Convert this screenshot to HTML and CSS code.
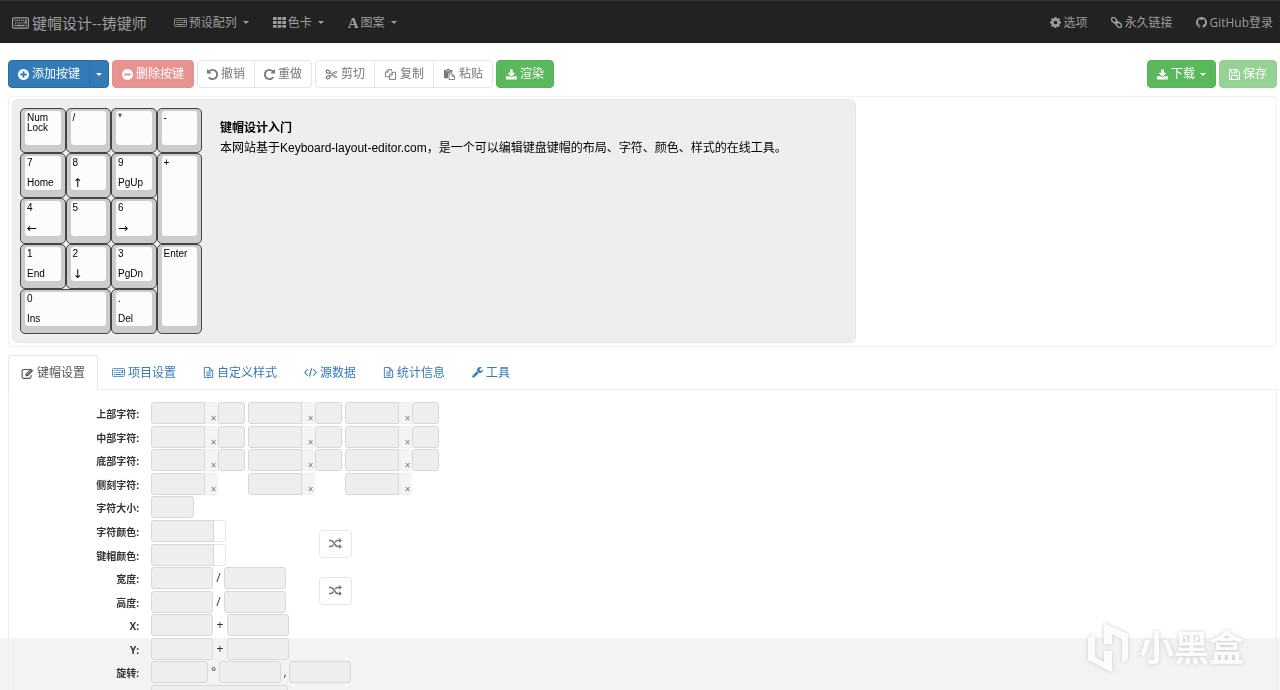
FILE: index.html
```html
<!DOCTYPE html>
<html lang="zh-CN">
<head>
<meta charset="utf-8">
<title>键帽设计--铸键师</title>
<link rel="stylesheet" href="styles.css">
</head>
<body>
<svg class="sprite" aria-hidden="true">
  <symbol id="keyboard" viewBox="0 0 15 10"><rect x=".5" y=".5" width="14" height="9" rx="1" fill="none" stroke="currentColor"/><path d="M2 2.7h11M2.6 4.9h10" stroke="currentColor" stroke-width="1.2" stroke-dasharray="1.2 .7"/><path d="M2 7.2h1.4M4 7.2h7M11.6 7.2h1.4M12.4 2.2v3.4" stroke="currentColor" stroke-width="1.2"/></symbol>
  <symbol id="grid" viewBox="0 0 12 10"><path fill="currentColor" d="M0 0h3.4v2.7H0zM4.3 0h3.4v2.7H4.3zM8.6 0H12v2.7H8.6zM0 3.6h3.4v2.7H0zM4.3 3.6h3.4v2.7H4.3zM8.6 3.6H12v2.7H8.6zM0 7.2h3.4v2.7H0zM4.3 7.2h3.4v2.7H4.3zM8.6 7.2H12v2.7H8.6z"/></symbol>
  <symbol id="cog" viewBox="128 128 1536 1536"><path fill="currentColor" d="M1152 896q0-106-75-181t-181-75-181 75-75 181 75 181 181 75 181-75 75-181zm512-109v222q0 12-8 23t-20 13l-185 28q-19 54-39 91 35 50 107 138 10 12 10 25t-9 23q-27 37-99 108t-94 71q-12 0-26-9l-138-108q-44 23-91 38-16 136-29 186-7 28-36 28h-222q-14 0-24.5-8.5t-11.5-21.5l-28-184q-49-16-90-37l-141 107q-10 9-25 9-14 0-25-11-126-114-165-168-7-10-7-23 0-12 8-23 15-21 51-66.5t54-70.5q-27-50-41-99l-183-27q-13-2-21-12.5t-8-23.5v-222q0-12 8-23t19-13l186-28q14-46 39-92-40-57-107-138-10-12-10-24 0-10 9-23 26-36 98.5-107.5t94.5-71.5q13 0 26 10l138 107q44-23 91-38 16-136 29-186 7-28 36-28h222q14 0 24.5 8.5t11.5 21.5l28 184q49 16 90 37l142-107q9-9 24-9 13 0 25 10 129 119 165 170 7 8 7 22 0 12-8 23-15 21-51 66.5t-54 70.5q26 50 41 98l183 28q13 2 21 12.5t8 23.5z"/></symbol>
  <symbol id="link" viewBox="0 0 12 12"><g fill="none" stroke="currentColor" stroke-width="1.6" transform="rotate(45 6 6)"><rect x="-.9" y="3.9" width="6.6" height="4.2" rx="2"/><rect x="6.3" y="3.9" width="6.6" height="4.2" rx="2"/><path d="M4 6h4"/></g></symbol>
  <symbol id="github" viewBox="128 128 1536 1536"><path fill="currentColor" d="M896 128q209 0 385.500 103t279.500 279.500 103 385.500q0 251-146.500 451.500t-378.500 277.500q-27 5-40-7t-13-30q0-3 .5-76.500t.5-134.500q0-97-52-142 57-6 102.500-18t94-39 81-66.500 53-105 20.500-150.500q0-119-79-206 37-91-8-204-28-9-81 11t-92 44l-38 24q-93-26-192-26t-192 26q-16-11-42.500-27t-83.500-38.500-85-13.500q-45 113-8 204-79 87-79 206 0 85 20.500 150t52.500 105 80.500 67 94 39 102.500 18q-39 36-49 103-21 10-45 15t-57 5-65.500-21.500-55.500-62.500q-19-32-48.500-52t-49.500-24l-20-3q-21 0-29 4.500t-5 11.500 9 14 13 12l7 5q22 10 43.500 38t31.500 51l10 23q13 38 44 61.500t67 30 69.500 7 55.500-3.500l23-4q0 38 .5 88.500t.5 54.500q0 18-13 30t-40 7q-232-77-378.500-277.500t-146.500-451.500q0-209 103-385.500t279.500-279.500 385.500-103z"/></symbol>
  <symbol id="plus" viewBox="128 128 1536 1536"><path fill="currentColor" d="M1344 960v-128q0-26-19-45t-45-19h-256v-256q0-26-19-45t-45-19h-128q-26 0-45 19t-19 45v256h-256q-26 0-45 19t-19 45v128q0 26 19 45t45 19h256v256q0 26 19 45t45 19h128q26 0 45-19t19-45v-256h256q26 0 45-19t19-45zm320-64q0 209-103 385.500t-279.500 279.500-385.500 103-385.500-103-279.500-279.500-103-385.500 103-385.500 279.500-279.500 385.500-103 385.500 103 279.500 279.500 103 385.500z"/></symbol>
  <symbol id="minus" viewBox="128 128 1536 1536"><path fill="currentColor" d="M1344 960v-128q0-26-19-45t-45-19h-768q-26 0-45 19t-19 45v128q0 26 19 45t45 19h768q26 0 45-19t19-45zm320-64q0 209-103 385.500t-279.500 279.500-385.500 103-385.500-103-279.500-279.500-103-385.500 103-385.500 279.500-279.500 385.500-103 385.500 103 279.500 279.500 103 385.500z"/></symbol>
  <symbol id="undo" viewBox="128 128 1536 1536"><path fill="currentColor" d="M1664 896q0 156-61 298t-164 245-245 164-298 61q-172 0-327-72.500t-264-204.500q-7-10-6.500-22.500t8.500-20.500l137-138q10-9 25-9 16 2 23 12 73 95 179 147t225 52q104 0 198.500-40.500t163.500-109.500 109.500-163.500 40.500-198.500-40.500-198.500-109.500-163.500-163.500-109.500-198.500-40.500q-98 0-188 35.500t-160 101.500l137 138q31 30 14 69-17 40-59 40h-448q-26 0-45-19t-19-45v-448q0-42 40-59 39-17 69 14l130 129q107-101 244.500-156.500t284.500-55.500q156 0 298 61t245 164 164 245 61 298z"/></symbol>
  <symbol id="scissors" viewBox="0 0 13 12"><g fill="none" stroke="currentColor"><ellipse cx="2.900" cy="3" rx="2.200" ry="1.600" stroke-width="1.300" transform="rotate(25 2.900 3)"/><ellipse cx="2.900" cy="9" rx="2.200" ry="1.600" stroke-width="1.300" transform="rotate(-25 2.900 9)"/><path d="M4.700 4.200 8 6l4.500-2.800-1.300-.6L6.300 5M4.700 7.800 8 6l4.500 2.800-1.300.6L6.300 7" stroke-width=".9"/></g></symbol>
  <symbol id="copy" viewBox="0 0 12 12"><path fill="none" stroke="currentColor" d="M4.500 8.500h-4v-5l3-3h3.500v2M3.500.5v3h-3M5 11.500v-5l3-3h3.500v8zM8 3.500v3H5"/></symbol>
  <symbol id="paste" viewBox="0 0 12 12"><path fill="currentColor" d="M0 1h2.500V0h4v1H9v3H6L4.500 5.500V10H0z"/><path fill="none" stroke="currentColor" d="M5.500 11.500v-6H9l2.500 2.500v3.500zM9 5.500V8h2.500"/><path stroke="#fff" stroke-width=".7" d="M2 2h5"/></symbol>
  <symbol id="download" viewBox="64 0 1664 1536"><path fill="currentColor" d="M1344 1344q0-26-19-45t-45-19-45 19-19 45 19 45 45 19 45-19 19-45zm256 0q0-26-19-45t-45-19-45 19-19 45 19 45 45 19 45-19 19-45zm128-224v320q0 40-28 68t-68 28h-1472q-40 0-68-28t-28-68v-320q0-40 28-68t68-28h465l135 136q58 56 136 56t136-56l136-136h464q40 0 68 28t28 68zm-325-569q17 41-14 70l-448 448q-18 19-45 19t-45-19l-448-448q-31-29-14-70 17-39 59-39h256v-448q0-26 19-45t45-19h256q26 0 45 19t19 45v448h256q42 0 59 39z"/></symbol>
  <symbol id="save" viewBox="0 0 11 11"><path fill="none" stroke="currentColor" d="M.5.5h7.500l2.500 2.500v7.500H.5zM2.500 10.500V6.500h6v4M2.500.5v3.500h5V.5M6 1.200v2"/></symbol>
  <symbol id="edit" viewBox="0 0 12 11"><path fill="none" stroke="currentColor" stroke-width="1.100" d="M8.500 1.500H2.300A1.700 1.700 0 0 0 .6 3.200v5.500a1.700 1.700 0 0 0 1.700 1.700h5.500a1.700 1.700 0 0 0 1.700-1.700V7"/><path fill="currentColor" d="M4 8.300V5.900L9.400.5l2.300 2.300-5.400 5.500z"/><path stroke="#fff" stroke-width=".6" d="m5.500 6.300 4-4"/></symbol>
  <symbol id="file" viewBox="0 0 10 12"><path fill="none" stroke="currentColor" d="M.5.5h5.700l3.300 3.300v7.700h-9zM6 .5V4h3.500M2.500 5.500h5M2.500 7.500h5M2.500 9.500h5"/></symbol>
  <symbol id="code" viewBox="0 0 14 10"><path fill="none" stroke="currentColor" stroke-width="1.200" d="M4 1.500.9 5 4 8.500M10 1.500 13.100 5 10 8.500M8.200.5 5.800 9.500"/></symbol>
  <symbol id="wrench" viewBox="64 128 1664 1664"><path fill="currentColor" d="M448 1472q0-26-19-45t-45-19-45 19-19 45 19 45 45 19 45-19 19-45zm644-420l-682 682q-37 37-90 37-52 0-91-37l-106-108q-38-36-38-90 0-53 38-91l681-681q39 98 114.500 173.500t173.500 114.500zm634-435q0 39-23 106-47 134-164.500 217.500t-258.500 83.500q-185 0-316.500-131.500t-131.500-316.500 131.500-316.500 316.500-131.500q58 0 121.500 16.500t107.500 46.500q16 11 16 28t-16 28l-293 169v224l193 107q5-3 79-48.500t135.500-81 70.500-35.500q15 0 23.500 10t8.500 25z"/></symbol>
  <symbol id="random" viewBox="0 0 12 10"><path fill="none" stroke="currentColor" stroke-width="1.400" d="M0 2.200h1.800C4.800 2.200 5 7.800 8 7.800h1.800M0 7.800h1.800c1.200 0 1.800-.8 2.300-1.700M5.600 3.800C6.200 2.800 6.800 2.200 8 2.200h1.800"/><path fill="currentColor" d="m9.300 0 2.700 2.200-2.700 2.200zM9.300 5.600 12 7.800 9.300 10z"/></symbol>
</svg>

<nav class="navbar">
  <a class="brand" href="#"><svg class="icon icon-brand"><use href="#keyboard"/></svg>键帽设计--铸键师</a>
  <a class="nav-item" href="#"><svg class="icon icon-wide"><use href="#keyboard"/></svg>预设配列<span class="caret"></span></a>
  <a class="nav-item" href="#"><svg class="icon icon-wide"><use href="#grid"/></svg>色卡<span class="caret"></span></a>
  <a class="nav-item" href="#"><b class="letter">A</b>图案<span class="caret"></span></a>
  <a class="nav-item push" href="#"><svg class="icon"><use href="#cog"/></svg>选项</a>
  <a class="nav-item" href="#"><svg class="icon"><use href="#link"/></svg>永久链接</a>
  <a class="nav-item" href="#"><svg class="icon"><use href="#github"/></svg>GitHub登录</a>
</nav>

<main class="page">
  <div class="toolbar">
    <div class="group">
      <button class="btn primary"><svg class="icon"><use href="#plus"/></svg>添加按键</button>
      <button class="btn primary split" aria-label="更多按键"><span class="caret"></span></button>
    </div>
    <button class="btn danger"><svg class="icon"><use href="#minus"/></svg>删除按键</button>
    <div class="group">
      <button class="btn"><svg class="icon"><use href="#undo"/></svg>撤销</button>
      <button class="btn"><svg class="icon flip"><use href="#undo"/></svg>重做</button>
    </div>
    <div class="group">
      <button class="btn"><svg class="icon icon-wide"><use href="#scissors"/></svg>剪切</button>
      <button class="btn"><svg class="icon icon-wide"><use href="#copy"/></svg>复制</button>
      <button class="btn"><svg class="icon icon-wide"><use href="#paste"/></svg>粘贴</button>
    </div>
    <button class="btn success"><svg class="icon"><use href="#download"/></svg>渲染</button>
    <button class="btn success push"><svg class="icon"><use href="#download"/></svg>下载<span class="caret"></span></button>
    <button class="btn success faded"><svg class="icon"><use href="#save"/></svg>保存</button>
  </div>

  <section class="stage">
    <div class="board">
      <div class="keys">
        <div class="key"><div class="cap"><span>Num Lock</span></div></div>
        <div class="key"><div class="cap"><span>/</span></div></div>
        <div class="key"><div class="cap"><span>*</span></div></div>
        <div class="key"><div class="cap"><span>-</span></div></div>
        <div class="key"><div class="cap"><span>7</span><span>Home</span></div></div>
        <div class="key"><div class="cap"><span>8</span><span class="arrow">↑</span></div></div>
        <div class="key"><div class="cap"><span>9</span><span>PgUp</span></div></div>
        <div class="key tall"><div class="cap"><span>+</span></div></div>
        <div class="key"><div class="cap"><span>4</span><span class="arrow">←</span></div></div>
        <div class="key"><div class="cap"><span>5</span></div></div>
        <div class="key"><div class="cap"><span>6</span><span class="arrow">→</span></div></div>
        <div class="key"><div class="cap"><span>1</span><span>End</span></div></div>
        <div class="key"><div class="cap"><span>2</span><span class="arrow">↓</span></div></div>
        <div class="key"><div class="cap"><span>3</span><span>PgDn</span></div></div>
        <div class="key tall"><div class="cap"><span>Enter</span></div></div>
        <div class="key wide"><div class="cap"><span>0</span><span>Ins</span></div></div>
        <div class="key"><div class="cap"><span>.</span><span>Del</span></div></div>
      </div>
      <div class="intro">
        <h1>键帽设计入门</h1>
        <p>本网站基于Keyboard-layout-editor.com，是一个可以编辑键盘键帽的布局、字符、颜色、样式的在线工具。</p>
      </div>
    </div>
  </section>

  <div class="tabs">
    <a class="tab active" href="#"><svg class="icon icon-wide"><use href="#edit"/></svg>键帽设置</a>
    <a class="tab" href="#"><svg class="icon icon-wide"><use href="#keyboard"/></svg>项目设置</a>
    <a class="tab" href="#"><svg class="icon"><use href="#file"/></svg>自定义样式</a>
    <a class="tab" href="#"><svg class="icon icon-wide"><use href="#code"/></svg>源数据</a>
    <a class="tab" href="#"><svg class="icon"><use href="#file"/></svg>统计信息</a>
    <a class="tab" href="#"><svg class="icon"><use href="#wrench"/></svg>工具</a>
  </div>

  <form class="panel">
    <div class="rows">
      <div class="row"><label for="t1">上部字符:</label>
        <div class="legend"><input id="t1"><button type="button">×</button><input aria-label="大小"></div>
        <div class="legend"><input aria-label="上中"><button type="button">×</button><input aria-label="大小"></div>
        <div class="legend"><input aria-label="上右"><button type="button">×</button><input aria-label="大小"></div></div>
      <div class="row"><label for="m1">中部字符:</label>
        <div class="legend"><input id="m1"><button type="button">×</button><input aria-label="大小"></div>
        <div class="legend"><input aria-label="中中"><button type="button">×</button><input aria-label="大小"></div>
        <div class="legend"><input aria-label="中右"><button type="button">×</button><input aria-label="大小"></div></div>
      <div class="row"><label for="b1">底部字符:</label>
        <div class="legend"><input id="b1"><button type="button">×</button><input aria-label="大小"></div>
        <div class="legend"><input aria-label="下中"><button type="button">×</button><input aria-label="大小"></div>
        <div class="legend"><input aria-label="下右"><button type="button">×</button><input aria-label="大小"></div></div>
      <div class="row"><label for="s1">侧刻字符:</label>
        <div class="legend"><input id="s1"><button type="button">×</button></div>
        <div class="legend"><input aria-label="侧中"><button type="button">×</button></div>
        <div class="legend"><input aria-label="侧右"><button type="button">×</button></div></div>
    </div>
    <div class="rows"><div class="row"><label for="fs">字符大小:</label><input class="small" id="fs"></div></div>
    <div class="swap">
      <div class="rows">
        <div class="row"><label for="fc">字符颜色:</label><input class="hex" id="fc"><button class="swatch" type="button" aria-label="选择字符颜色"></button></div>
        <div class="row"><label for="kc">键帽颜色:</label><input class="hex" id="kc"><button class="swatch" type="button" aria-label="选择键帽颜色"></button></div>
      </div>
      <button class="btn shuffle" type="button" aria-label="交换颜色"><svg class="icon icon-wide"><use href="#random"/></svg></button>
    </div>
    <div class="swap">
      <div class="rows">
        <div class="row"><label for="w">宽度:</label><input class="num" id="w"><span class="sep">/</span><input class="num" aria-label="宽度2"></div>
        <div class="row"><label for="h">高度:</label><input class="num" id="h"><span class="sep">/</span><input class="num" aria-label="高度2"></div>
      </div>
      <button class="btn shuffle" type="button" aria-label="交换尺寸"><svg class="icon icon-wide"><use href="#random"/></svg></button>
    </div>
    <div class="rows">
      <div class="row"><label for="x">X:</label><input class="num" id="x"><span class="sep plus">+</span><input class="num" aria-label="X2"></div>
      <div class="row"><label for="y">Y:</label><input class="num" id="y"><span class="sep plus">+</span><input class="num" aria-label="Y2"></div>
    </div>
    <div class="rows">
      <div class="row"><label for="r">旋转:</label><input class="angle" id="r"><span class="sep">°</span><input class="num" aria-label="旋转X"><span class="sep comma">,</span><input class="num" aria-label="旋转Y"></div>
      <div class="row"><label for="p" aria-label="配置"></label><input class="long" id="p"></div>
    </div>
  </form>
</main>
<div class="band"></div>
<div class="watermark">
  <svg class="mark" viewBox="0 0 44 50"><path fill="currentColor" d="M17 0 41 11v25l-6 4V16l-10-5v10h-8zM8 11v23l9 5V28h8v21L1 37V15z"/></svg>
  <span>小黑盒</span>
</div>
</body>
</html>
```
FILE: styles.css
```css
* { box-sizing: border-box; }
body {
  margin: 0;
  height: 100vh;
  display: flex;
  flex-direction: column;
  overflow: hidden;
  color: #333;
  font: 12px/18px "Open Sans", "Noto Sans CJK SC", sans-serif;
}
button, input { font: inherit; color: inherit; margin: 0; }
a { text-decoration: none; color: inherit; }
.sprite { position: absolute; width: 0; height: 0; }
.icon { width: 11px; height: 11px; margin-right: 3px; flex: none; }
.icon-wide { width: 13px; }
.icon-brand { width: 17px; height: 12px; margin-right: 3px; }
.flip { transform: scaleX(-1); }
.push { margin-left: auto; }
.caret {
  border: 3px solid transparent;
  border-top-color: currentColor;
  border-bottom: 0;
  margin-left: 5px;
}

.navbar {
  flex: none;
  height: 43px;
  display: flex;
  align-items: center;
  padding: 2px 7px 0 12px;
  background: #222;
  border-top: 1px solid #333;
  border-bottom: 1px solid #1a1a1a;
  color: #9d9d9d;
}
.brand { display: flex; align-items: center; margin-right: 15px; font-size: 15px; }
.nav-item { display: flex; align-items: center; padding: 0 12px; }
.nav-item .icon { margin-right: 2px; }
.nav-item .caret { margin-left: 6px; }
.nav-item:last-child { padding-right: 0; }
.letter { font: bold 15px/18px "Liberation Serif", serif; margin-right: 2px; }

.page {
  flex: 1;
  min-height: 0;
  display: flex;
  flex-direction: column;
  padding: 17px 3px 0 8px;
}
.toolbar { flex: none; display: flex; gap: 3px; height: 28px; margin-bottom: 8px; }
.group { display: flex; }
.btn {
  display: flex;
  align-items: center;
  justify-content: center;
  height: 28px;
  padding: 0 9px;
  background: #fff;
  border: 1px solid #e6e6e6;
  border-radius: 4px;
  color: #777;
}
.group .btn:not(:last-child) { border-top-right-radius: 0; border-bottom-right-radius: 0; }
.group .btn:not(:first-child) { border-top-left-radius: 0; border-bottom-left-radius: 0; margin-left: -1px; }
.btn.primary { background: #337ab7; border-color: #2e6da4; color: #fff; }
.btn.split { padding: 0 6px; }
.split .caret { margin: 0; }
.btn.danger { background: #e89391; border-color: #e68f8c; color: #fff; }
.btn.success { background: #5cb85c; border-color: #55b455; color: #fff; }
.btn.success.push { margin-left: auto; }
.btn.success.faded { background: #96d196; border-color: #92cf92; }

.stage {
  flex: none;
  padding: 2px 3px 3px;
  border: 1px dotted #e4e4e4;
  border-radius: 4px;
  margin-bottom: 8px;
}
.board {
  display: flex;
  width: 844px;
  max-width: 100%;
  padding: 8px 7px;
  background: #eee;
  border: 1px solid #e8e8e8;
  border-radius: 6px;
  color: #000;
}
.keys {
  flex: none;
  display: grid;
  width: 182px;
  height: 226px;
  grid-template: repeat(5, 1fr) / repeat(4, 1fr);
}
.key {
  display: flex;
  padding: 2px 4px 7px;
  border: 1px solid #444;
  border-radius: 5px;
  background: #ccc;
}
.tall { grid-row: span 2; }
.wide { grid-column: span 2; }
.cap {
  flex: 1;
  min-width: 0;
  display: flex;
  flex-direction: column;
  padding: 2px;
  border-radius: 3px;
  background: #fcfcfc;
  font: 10px/10px "Liberation Sans", "DejaVu Sans", sans-serif;
}
.cap span + span { margin-top: 10px; }
.cap .arrow { font-family: "DejaVu Sans", sans-serif; font-size: 12px; }
.intro { padding: 10px 0 0 18px; font: 12px/20px "Liberation Sans", "Noto Sans CJK SC", sans-serif; }
.intro h1 { margin: 0; font-size: 12px; line-height: 20px; }
.intro p { margin: 0; }

.tabs { flex: none; display: flex; height: 35px; border-bottom: 1px solid #eee; color: #337ab7; }
.tab { display: flex; align-items: center; height: 35px; padding: 0 13px 0 14px; }
.tab.active {
  padding: 0 12px;
  color: #555;
  background: #fff;
  border: 1px solid #e6e6e6;
  border-bottom: 0;
  border-radius: 4px 4px 0 0;
}
.panel {
  flex: 1;
  min-height: 0;
  overflow: hidden;
  padding-top: 12px;
  border: 1px solid #eee;
  border-width: 0 1px;
}
.row { display: flex; height: 22px; margin-bottom: 1px; }
.row:first-child, .row:nth-child(3) { margin-bottom: 2px; }
.row label {
  width: 130px;
  margin-right: 12px;
  padding-top: 3px;
  text-align: right;
  font-size: 10px;
  font-weight: bold;
}
.row input {
  min-width: 0;
  height: 22px;
  padding: 0 3px;
  background: #eee;
  border: 1px solid #d8d8d8;
  border-radius: 3px;
}
.legend { display: flex; width: 94px; margin-right: 3px; }
.legend input { width: 27px; }
.legend input:first-child { width: 54px; border-radius: 3px 0 0 3px; }
.legend button {
  width: 13px;
  padding: 10px 0 0 4px;
  background: #f4f4f4;
  border: 1px solid #eee;
  border-width: 1px 0;
  border-radius: 0 3px 3px 0;
  font-size: 10px;
  line-height: 10px;
  color: #777;
}
.row .small { width: 43px; }
.row .hex { width: 63px; border-radius: 3px 0 0 3px; }
.swatch { width: 12px; padding: 0; background: #fff; border: 1px solid #e6e6e6; border-left: 0; border-radius: 0 3px 3px 0; }
.row .num { width: 62px; }
.row .angle { width: 57px; }
.row .long { width: 137px; }
.sep { width: 11px; text-align: center; line-height: 22px; }
.sep.plus { width: 14px; }
.sep.comma { width: 8px; }
.swap { display: flex; align-items: center; }
.swap .rows { width: 310px; }
.shuffle { width: 33px; }
.shuffle .icon { margin: 0; }

.band { position: fixed; inset: auto 0 0; height: 52px; background: #f3f3f3; z-index: -1; }
.watermark {
  position: fixed;
  right: 36px;
  bottom: 17px;
  display: flex;
  align-items: center;
  gap: 8px;
  filter: drop-shadow(0 0 2px #ccc);
  color: #fcfcfc;
  font: bold 35px/46px "Noto Sans CJK SC", sans-serif;
}
.watermark span { padding-bottom: 4px; }
.mark { width: 44px; height: 50px; }
```
